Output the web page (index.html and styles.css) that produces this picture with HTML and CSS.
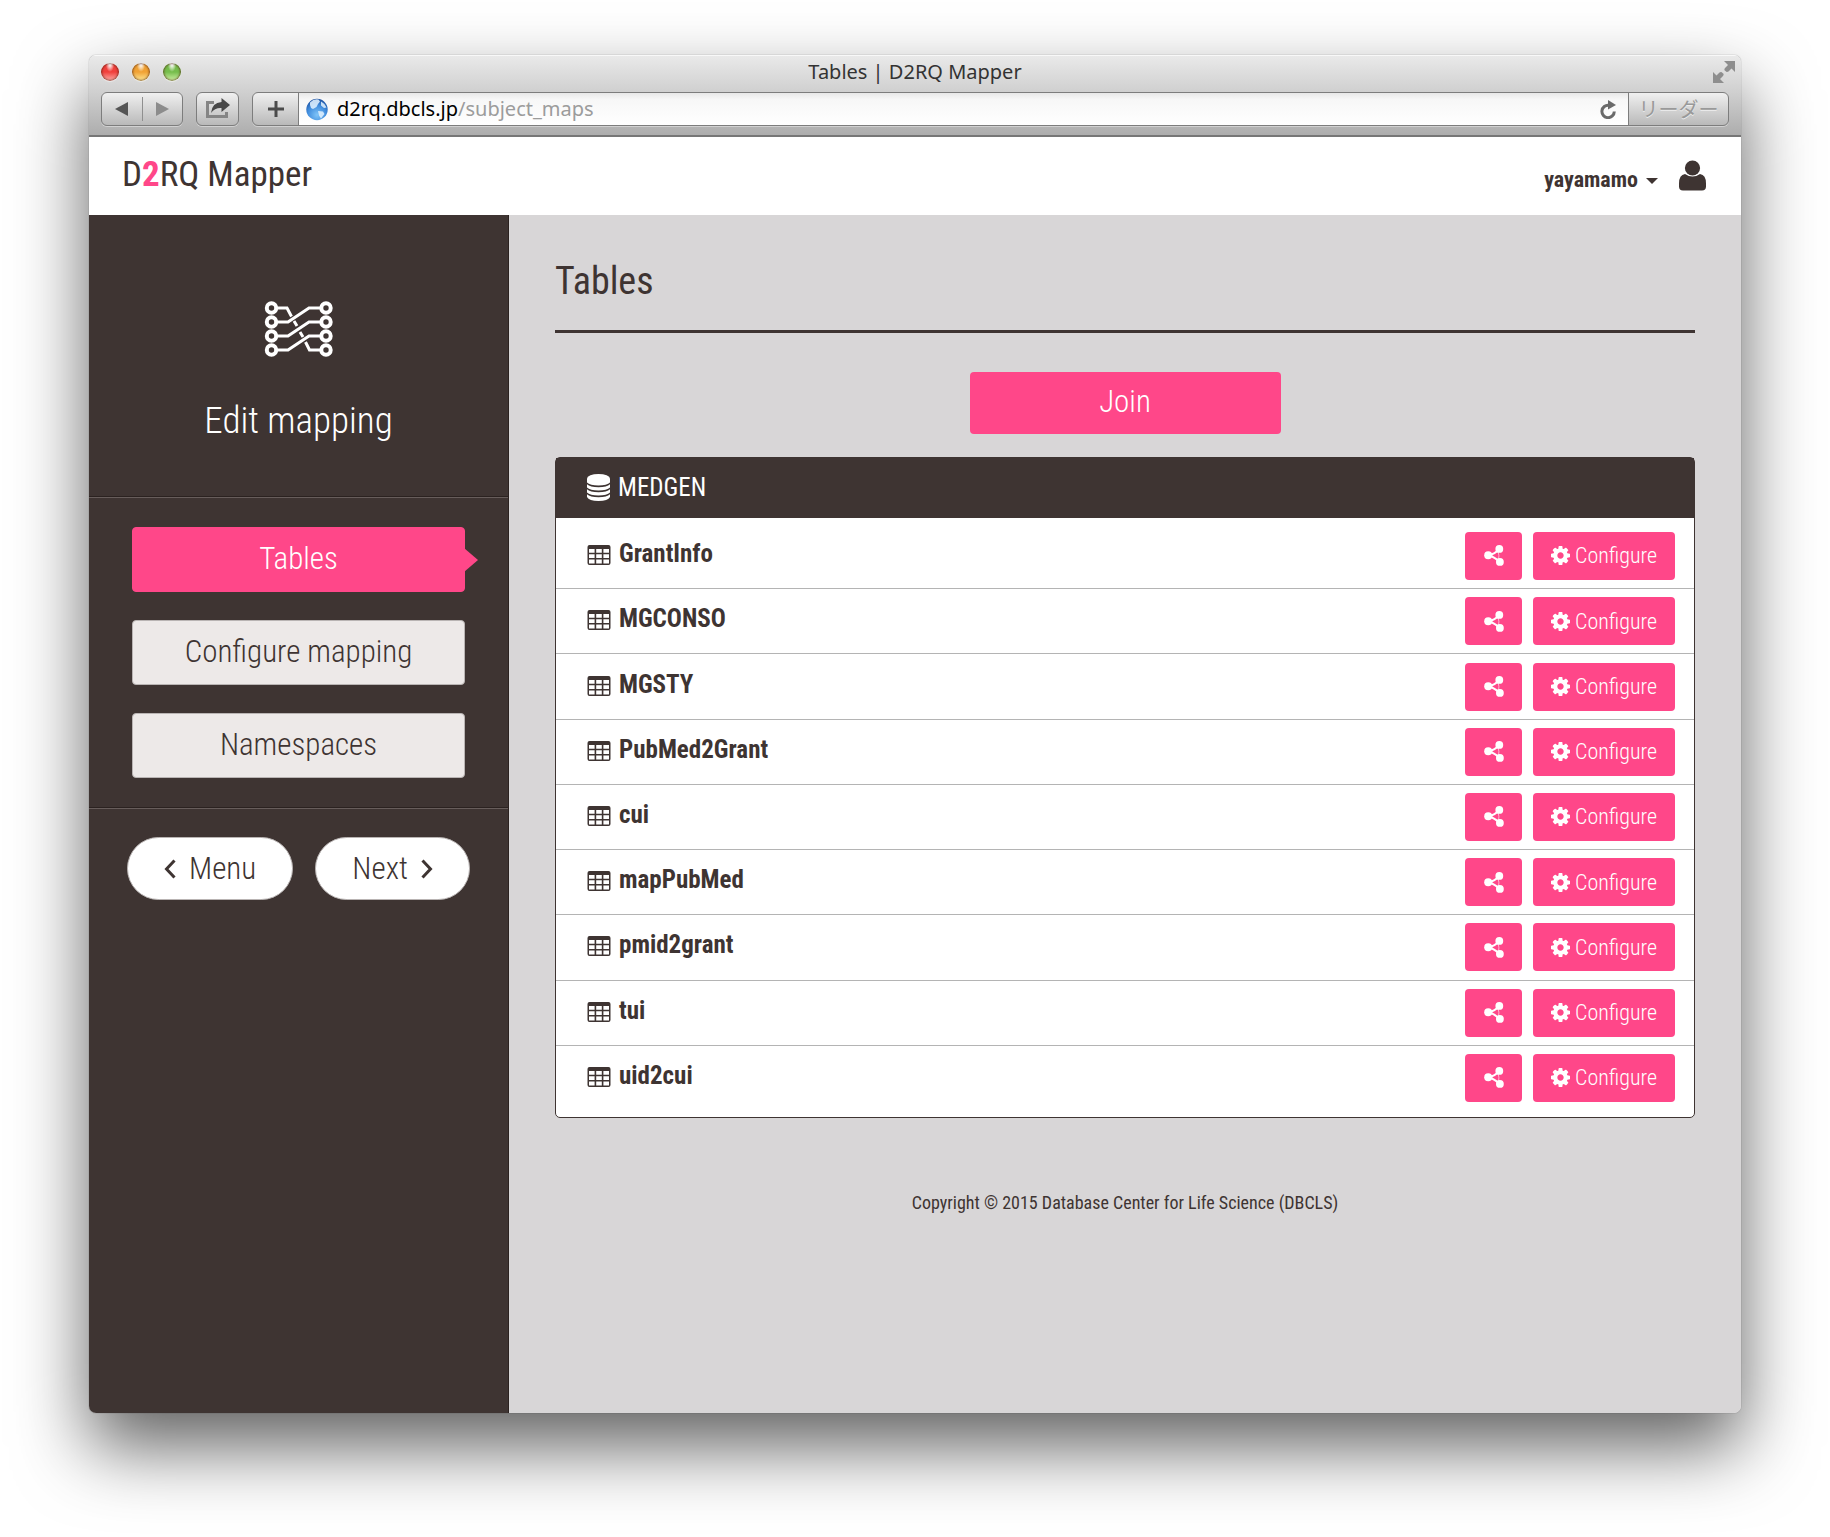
FILE: index.html
```html
<!DOCTYPE html>
<html lang="en">
<head>
<meta charset="utf-8">
<title>Tables | D2RQ Mapper</title>
<link rel="stylesheet" href="styles.css">
</head>
<body>
<svg class="defs" aria-hidden="true">
  <symbol id="table" viewBox="0 0 24 20"><path fill="currentColor" fill-rule="evenodd" d="M2.500 0h19a2 2 0 0 1 2 2v16a2 2 0 0 1-2 2h-19a2 2 0 0 1-2-2V2a2 2 0 0 1 2-2zM2 4v3.700h5.600V4zm7.200 0v3.700h5.600V4zm7.200 0v3.700H22V4zM2 9.300v3.600h5.600V9.300zm7.200 0v3.600h5.600V9.300zm7.200 0v3.600H22V9.300zM2 14.500V18.400h5.600v-3.900zm7.200 0v3.900h5.600v-3.900zm7.200 0v3.900H22v-3.900z"/></symbol>
  <symbol id="share" viewBox="0 0 20 21"><path d="M15.500 3.800Q11 9 4.200 10.300Q11 12 15.500 17" fill="none" stroke="currentColor" stroke-width="2"/><path d="M14 5.500Q15.500 10.500 14.500 15.500" fill="none" stroke="currentColor" stroke-width="1" opacity=".6"/><circle cx="15.300" cy="3.900" r="3.900" fill="currentColor"/><circle cx="4.200" cy="10.300" r="4" fill="currentColor"/><circle cx="15.900" cy="16.900" r="3.900" fill="currentColor"/></symbol>
  <symbol id="gear" viewBox="0 0 1536 1536"><path fill="currentColor" d="M1024 768q0-106-75-181t-181-75-181 75-75 181 75 181 181 75 181-75 75-181zm512-109v222q0 12-8 23t-20 13l-185 28q-19 54-39 91 35 50 107 138 10 12 10 25t-9 23q-27 37-99 108t-94 71q-12 0-26-9l-138-108q-44 23-91 38-16 136-29 186-7 28-36 28H657q-14 0-24.500-8.500T621 1506l-28-184q-49-16-90-37l-141 107q-10 9-25 9-14 0-25-11-126-114-165-168-7-10-7-23 0-12 8-23 15-21 51-66.500t54-70.500q-27-50-41-99L29 913q-13-2-21-12.500T0 877V655q0-12 8-23t19-13l186-28q14-46 39-92-40-57-107-138-10-12-10-24 0-10 9-23 26-36 98.500-107.500T337 135q13 0 26 10l138 107q44-23 91-38 16-136 29-186 7-28 36-28h222q14 0 24.500 8.500T915 30l28 184q49 16 90 37l142-107q9-9 24-9 13 0 25 10 129 119 165 170 7 8 7 22 0 12-8 23-15 21-51 66.500t-54 70.500q26 50 41 98l183 28q13 2 21 12.500t8 23.500z"/></symbol>
</svg>
<div class="window">
  <header class="chrome">
    <div class="titlebar">
      <div class="lights"><button class="light red" aria-label="Close"></button><button class="light amber" aria-label="Minimize"></button><button class="light green" aria-label="Zoom"></button></div>
      <div class="title">Tables | D2RQ Mapper</div>
      <button class="fullscreen" aria-label="Full screen"><svg width="22" height="22" viewBox="0 0 22 22"><path fill="#8e8e8e" d="M11 0h11v11l-3.500-3.500-3 3q-2 1-3-.5-2-1-.5-3l3-3zM0 11l3.500 3.500 3-3q2-1 3 .5 2 1 .5 3l-3 3L11 22H0z"/></svg></button>
    </div>
    <div class="toolbar">
      <div class="nav">
        <button aria-label="Back"><svg width="14" height="14" viewBox="0 0 14 14"><path d="M0 7 13 0v14z" fill="#555"/></svg></button>
        <button aria-label="Forward"><svg width="14" height="14" viewBox="0 0 14 14"><path d="M14 7 1 0v14z" fill="#8c8c8c"/></svg></button>
      </div>
      <button class="tool" aria-label="Share"><svg width="25" height="22" viewBox="0 0 25 22"><path d="M9 4.500H2.500v14h19V14" fill="none" stroke="#858585" stroke-width="3"/><path d="M6 15Q7 4.500 16.500 4V0L25 7l-8.500 7v-4Q10 9.500 6 15z" fill="#484848"/></svg></button>
      <div class="location">
        <button class="add" aria-label="Add bookmark"><svg width="16" height="16" viewBox="0 0 16 16"><path d="M8 0v16M0 8h16" stroke="#4b4b4b" stroke-width="3"/></svg></button>
        <div class="url">
          <svg width="22" height="23" viewBox="0 0 22 23"><defs><radialGradient id="sea" cx=".5" cy=".75" r=".75"><stop offset="0" stop-color="#7fc4f8"/><stop offset=".6" stop-color="#3f8bdc"/><stop offset="1" stop-color="#1c4f9e"/></radialGradient></defs><circle cx="11" cy="11.500" r="10.700" fill="url(#sea)"/><path d="M4 4.500Q8 .5 12.500 1.500l1.500 2-2 2.500-1.500 3L7 11l-2-1-1-3zM15 3.500q4 2 5.500 6L18 10l-3-2.500zM12 13l5 .5 1.500 2.500-3.500 4.500-2-3z" fill="#e4f3ff" opacity=".85"/></svg>
          <span class="address"><b>d2rq.dbcls.jp</b>/subject_maps</span>
          <button aria-label="Reload"><svg width="17" height="19" viewBox="0 0 17 19"><path d="M14.300 11.500A6.200 6.200 0 1 1 9 5.300" fill="none" stroke="#6a6a6a" stroke-width="3"/><path d="M8 0l8 5-8 4.500z" fill="#6a6a6a"/></svg></button>
        </div>
        <button class="reader" lang="ja">リーダー</button>
      </div>
    </div>
  </header>

  <div class="masthead">
    <a class="logo" href="#">D<b>2</b>RQ Mapper</a>
    <button class="account"><span>yayamamo<i class="caret"></i></span><svg width="27" height="31" viewBox="0 0 27 31"><circle cx="13.500" cy="8" r="7.600" fill="currentColor"/><path d="M6 14q7.500 5 15 0 6 .8 6 9.500v3q0 4-4 4H4q-4 0-4-4v-3Q0 14.800 6 14z" fill="currentColor"/></svg></button>
  </div>

  <div class="page">
    <aside class="sidebar">
      <div class="step">
        <svg width="70" height="58" viewBox="0 0 70 58" fill="none" stroke="#fff"><g stroke-width="3"><path d="M13 22h11L45 8h11M13 36h11l21-14h11M13 50h11l21-14h11"/><path d="M13 8h10l4.500 8.500M30 21l3 5M36 32l3 5M41.500 42l4 8H56"/></g><g stroke-width="4"><circle cx="7.500" cy="8" r="4.700"/><circle cx="7.500" cy="22" r="4.700"/><circle cx="7.500" cy="36" r="4.700"/><circle cx="7.500" cy="50" r="4.700"/><circle cx="62" cy="8" r="4.700"/><circle cx="62" cy="22" r="4.700"/><circle cx="62" cy="36" r="4.700"/><circle cx="62" cy="50" r="4.700"/></g></svg>
        <p>Edit mapping</p>
      </div>
      <nav class="menu">
        <a class="active" href="#">Tables</a>
        <a href="#">Configure mapping</a>
        <a href="#">Namespaces</a>
      </nav>
      <div class="pager">
        <a href="#"><svg width="12" height="20" viewBox="0 0 12 20"><path d="M10.500 1.500 2.500 10l8 8.500" fill="none" stroke="currentColor" stroke-width="3"/></svg>Menu</a>
        <a href="#">Next<svg width="12" height="20" viewBox="0 0 12 20"><path d="M1.500 1.500 9.500 10l-8 8.500" fill="none" stroke="currentColor" stroke-width="3"/></svg></a>
      </div>
    </aside>
    <main class="content">
      <h1>Tables</h1>
      <button class="join">Join</button>
      <section class="panel">
        <h2><svg width="23" height="27" viewBox="0 0 23 27"><g fill="#fff"><path d="M0 4.500v4q3 3 11.500 3T23 8.500v-4a11.500 4.500 0 0 0-23 0z"/><path d="M0 10.200q3 3 11.500 3t11.500-3v3.300q-3 3-11.500 3T0 13.500zM0 15.200q3 3 11.500 3t11.500-3v3.300q-3 3-11.500 3T0 18.500zM0 20.200q3 3 11.500 3t11.500-3v2.800q-2 4-11.500 4T0 23z"/></g></svg>MEDGEN</h2>
        <ul>
          <li><svg class="grid" width="24" height="20"><use href="#table"/></svg><strong>GrantInfo</strong><button class="btn link" aria-label="Relations"><svg width="20" height="21"><use href="#share"/></svg></button><button class="btn"><svg width="19" height="19"><use href="#gear"/></svg>Configure</button></li>
          <li><svg class="grid" width="24" height="20"><use href="#table"/></svg><strong>MGCONSO</strong><button class="btn link" aria-label="Relations"><svg width="20" height="21"><use href="#share"/></svg></button><button class="btn"><svg width="19" height="19"><use href="#gear"/></svg>Configure</button></li>
          <li><svg class="grid" width="24" height="20"><use href="#table"/></svg><strong>MGSTY</strong><button class="btn link" aria-label="Relations"><svg width="20" height="21"><use href="#share"/></svg></button><button class="btn"><svg width="19" height="19"><use href="#gear"/></svg>Configure</button></li>
          <li><svg class="grid" width="24" height="20"><use href="#table"/></svg><strong>PubMed2Grant</strong><button class="btn link" aria-label="Relations"><svg width="20" height="21"><use href="#share"/></svg></button><button class="btn"><svg width="19" height="19"><use href="#gear"/></svg>Configure</button></li>
          <li><svg class="grid" width="24" height="20"><use href="#table"/></svg><strong>cui</strong><button class="btn link" aria-label="Relations"><svg width="20" height="21"><use href="#share"/></svg></button><button class="btn"><svg width="19" height="19"><use href="#gear"/></svg>Configure</button></li>
          <li><svg class="grid" width="24" height="20"><use href="#table"/></svg><strong>mapPubMed</strong><button class="btn link" aria-label="Relations"><svg width="20" height="21"><use href="#share"/></svg></button><button class="btn"><svg width="19" height="19"><use href="#gear"/></svg>Configure</button></li>
          <li><svg class="grid" width="24" height="20"><use href="#table"/></svg><strong>pmid2grant</strong><button class="btn link" aria-label="Relations"><svg width="20" height="21"><use href="#share"/></svg></button><button class="btn"><svg width="19" height="19"><use href="#gear"/></svg>Configure</button></li>
          <li><svg class="grid" width="24" height="20"><use href="#table"/></svg><strong>tui</strong><button class="btn link" aria-label="Relations"><svg width="20" height="21"><use href="#share"/></svg></button><button class="btn"><svg width="19" height="19"><use href="#gear"/></svg>Configure</button></li>
          <li><svg class="grid" width="24" height="20"><use href="#table"/></svg><strong>uid2cui</strong><button class="btn link" aria-label="Relations"><svg width="20" height="21"><use href="#share"/></svg></button><button class="btn"><svg width="19" height="19"><use href="#gear"/></svg>Configure</button></li>
        </ul>
      </section>
      <footer>Copyright © 2015 Database Center for Life Science (DBCLS)</footer>
    </main>
  </div>
</div>
</body>
</html>
```
FILE: styles.css
```css
* { box-sizing: border-box; }

:root {
  --ink: #3e3432;
  --pink: #ff4789;
}

body {
  margin: 0;
  min-height: 100vh;
  padding: 55px 89px 124px;
  display: flex;
  background: #fff;
  color: var(--ink);
  font-family: "Roboto Condensed", "Liberation Sans Narrow", Roboto, sans-serif;
  font-weight: 300;
}

button {
  border: 0;
  margin: 0;
  padding: 0;
  background: none;
  color: inherit;
  font: inherit;
}

a { color: inherit; text-decoration: none; }
svg { flex: none; display: block; }
.defs { position: absolute; width: 0; height: 0; }

.window {
  flex: 1;
  display: flex;
  flex-direction: column;
  border-radius: 7px;
  overflow: hidden;
  box-shadow: 0 0 1px rgba(0, 0, 0, .6), 0 34px 72px rgba(0, 0, 0, .62);
}

/* browser chrome */
.chrome {
  height: 82px;
  padding: 0 12px;
  background: linear-gradient(#e9e9e9, #d0d0d0 45%, #adadad);
  border-top: 1px solid #f8f8f8;
  border-bottom: 2px solid #767676;
  font-family: "Noto Sans", sans-serif;
  font-weight: 400;
}

.titlebar {
  display: grid;
  grid-template-columns: 1fr auto 1fr;
  align-items: center;
  height: 32px;
  margin-bottom: 4px;
}

.lights { display: flex; gap: 13px; }
.light {
  width: 18px;
  height: 18px;
  border-radius: 50%;
  box-shadow: inset 0 0 2px 1px rgba(70, 20, 0, .6), 0 1px 1px rgba(255, 255, 255, .5);
}
.red { background: radial-gradient(ellipse at 50% 0, #fff 0 8%, transparent 35%), linear-gradient(#f0403c 50%, #ffb3ad); }
.amber { background: radial-gradient(ellipse at 50% 0, #fff 0 8%, transparent 35%), linear-gradient(#f0a235 50%, #ffec9a); }
.green { background: radial-gradient(ellipse at 50% 0, #fff 0 8%, transparent 35%), linear-gradient(#76bd4c 50%, #d3f3a8); }

.title { font-size: 20px; line-height: 28px; color: #333; }
.fullscreen { justify-self: end; margin-right: -6px; }

.toolbar { display: flex; gap: 13px; height: 34px; }

.nav, .tool, .location {
  border: 1px solid #7d7d7d;
  border-radius: 6px;
  background: linear-gradient(#f0f0f0, #b9b9b9);
  box-shadow: 0 1px 0 rgba(255, 255, 255, .4);
}
.nav { display: flex; align-items: center; width: 82px; }
.nav button { flex: 1; display: flex; justify-content: center; padding: 5px 0; }
.nav button + button { border-left: 1px solid #8f8f8f; }
.tool { display: flex; align-items: center; justify-content: center; width: 43px; }

.location { flex: 1; display: flex; overflow: hidden; }
.add { display: flex; align-items: center; justify-content: center; width: 45px; }
.url {
  flex: 1;
  display: flex;
  align-items: center;
  gap: 9px;
  padding: 0 11px 0 7px;
  border: solid #7d7d7d;
  border-width: 0 1px;
  background: linear-gradient(#e8e8e8, #f7f7f7 20%, #fff);
}
.address { flex: 1; font-size: 20px; line-height: 28px; color: #9c9c9c; }
.address b { font-weight: 400; color: #000; }
.reader {
  width: 99px;
  color: #999;
  font-family: "Noto Sans CJK JP", sans-serif;
  font-size: 20px;
  line-height: 30px;
  text-shadow: 0 1px 0 #eee;
}

/* application header */
.masthead {
  display: flex;
  align-items: center;
  justify-content: space-between;
  height: 78px;
  padding: 0 35px 2px 33px;
  background: #fff;
}
.logo { font-size: 35px; line-height: 40px; font-weight: 400; }
.logo b { color: var(--pink); font-weight: 700; }
.account { display: flex; align-items: center; gap: 21px; font-size: 22px; line-height: 30px; font-weight: 700; }
.account span { display: flex; align-items: center; padding-top: 10px; }
.caret { margin: 2px 0 0 8px; border: 6px solid transparent; border-top-color: currentColor; border-bottom: 0; }

.page { flex: 1; display: flex; }

/* sidebar */
.sidebar { width: 420px; background: var(--ink); border-right: 1px solid #2b2220; }
.step {
  display: flex;
  flex-direction: column;
  align-items: center;
  gap: 37px;
  padding: 85px 0 49px;
  color: #fff;
}
.step p { margin: 0; font-size: 37px; line-height: 52px; }
.menu, .pager { border-top: 1px solid #2b2220; box-shadow: inset 0 1px 0 #675d5b; }
.menu {
  display: flex;
  flex-direction: column;
  gap: 28px;
  padding: 30px 43px 29px;
}
.menu a {
  position: relative;
  padding: 11px 0 12px;
  border: 1px solid #b9b4b3;
  border-radius: 4px;
  background: #ede9e8;
  font-size: 31px;
  line-height: 40px;
  text-align: center;
}
.menu .active { background: var(--pink); border-color: var(--pink); color: #fff; }
.menu .active::after {
  content: "";
  position: absolute;
  left: 100%;
  top: 20px;
  border: solid transparent;
  border-width: 12px 0 12px 14px;
  border-left-color: var(--pink);
}
.pager { display: flex; justify-content: space-between; padding: 29px 38px; }
.pager a {
  display: flex;
  align-items: center;
  gap: 13px;
  padding: 11px 36px 10px;
  border: 1px solid #b9b4b3;
  border-radius: 32px;
  background: #fff;
  font-size: 31px;
  line-height: 40px;
}

/* main column */
.content { flex: 1; padding: 41px 46px; background: #d8d6d7; }
.content h1 {
  margin: 0 0 39px;
  padding-bottom: 23px;
  border-bottom: 3px solid var(--ink);
  font-size: 38px;
  line-height: 51px;
  font-weight: 400;
}
.join {
  display: block;
  width: 311px;
  margin: 0 auto 23px;
  padding: 10px 0 12px;
  border-radius: 4px;
  background: var(--pink);
  color: #fff;
  font-size: 31px;
  line-height: 40px;
}
.panel { border: 1px solid var(--ink); border-radius: 5px; background: #fff; }
.panel h2 {
  display: flex;
  align-items: center;
  gap: 8px;
  margin: 0;
  padding: 14px 31px 15px;
  background: var(--ink);
  color: #fff;
  font-size: 25px;
  line-height: 31px;
  font-weight: 400;
}
.panel ul {
  display: grid;
  grid-auto-rows: 1fr;
  min-height: 599px;
  margin: 0;
  padding: 5px 0 7px;
  list-style: none;
}
.panel li {
  display: flex;
  align-items: center;
  padding: 0 19px 0 31px;
}
.panel li + li { border-top: 1px solid #b4b4b4; }
.panel strong { flex: 1; padding: 0 0 4px 8px; font-size: 25px; line-height: 32px; font-weight: 700; }
.grid { margin-bottom: 2px; }
.btn {
  display: flex;
  align-items: center;
  justify-content: center;
  gap: 5px;
  width: 142px;
  height: 48px;
  margin-left: 11px;
  border-radius: 4px;
  background: var(--pink);
  color: #fff;
  font-size: 22px;
}
.btn.link { width: 57px; }

footer { margin-top: 72px; text-align: center; font-size: 18px; line-height: 26px; font-weight: 400; }
```
